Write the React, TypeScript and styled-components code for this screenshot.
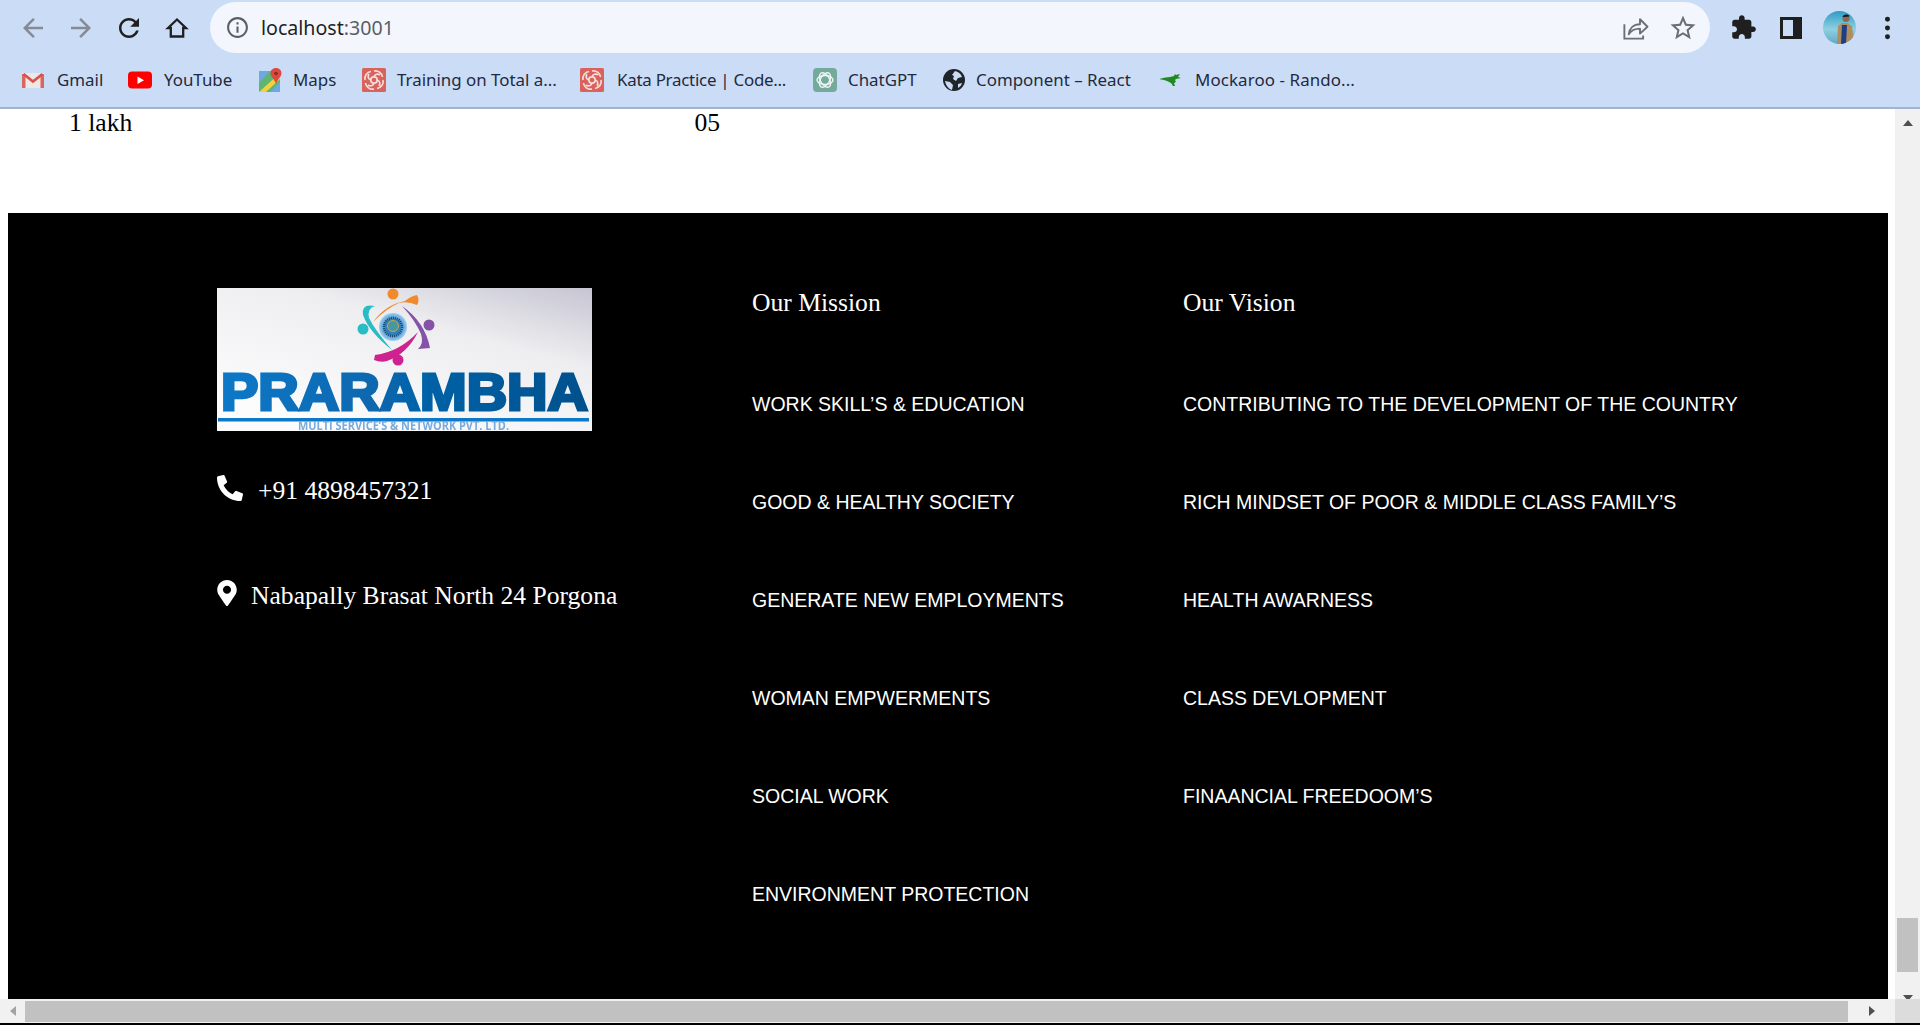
import React from "react";
import styled, { createGlobalStyle } from "styled-components";
import { FaPhoneAlt, FaMapMarkerAlt } from "react-icons/fa";

const Global = createGlobalStyle`
  html, body { margin: 0; padding: 0; background: #000; overflow: hidden; }
  #root { width: 1920px; height: 1025px; }
`;

const Window = styled.div`
  width: 1920px;
  height: 1025px;
  display: flex;
  flex-direction: column;
  overflow: hidden;
  background: #000;
`;
const Chrome = styled.header`
  height: 107px;
  flex: none;
  background: #cbdcf6;
  border-bottom: 2px solid #a4b4d0;
  display: flex;
  flex-direction: column;
`;
const Toolbar = styled.div`
  height: 62px;
  flex: none;
  display: flex;
  align-items: flex-start;
  padding: 2px 9px 0;
`;
const ToolButton = styled.button<{ $color?: string; $size?: number }>`
  width: 48px;
  height: 51px;
  flex: none;
  border: 0;
  padding: 0;
  background: none;
  display: flex;
  align-items: center;
  justify-content: center;
  color: ${(p) => p.$color || "#1f1f1f"};
  svg { width: ${(p) => p.$size || 30}px; height: ${(p) => p.$size || 30}px; fill: currentColor; display: block; }
`;
const Omnibox = styled.div`
  flex: none;
  width: 1500px;
  height: 51px;
  margin: 0 9px;
  border-radius: 26px;
  background: #f3f7fd;
  display: flex;
  align-items: center;
  padding: 0 3px 0 15px;
  box-sizing: border-box;
`;
const UrlText = styled.div`
  flex: 1;
  margin-left: 11px;
  font: 400 19.6px "Noto Sans", sans-serif;
  color: #5b5e63;
  b { font-weight: 400; color: #1f1f1f; }
`;
const Bookmarks = styled.nav`
  flex: 1;
  display: flex;
  align-items: center;
  padding: 0 0 11px 21px;
`;
const Bookmark = styled.div<{ $w: number; $gap?: number; $track?: number }>`
  width: ${(p) => p.$w}px;
  flex: none;
  display: flex;
  align-items: center;
  gap: ${(p) => p.$gap || 12}px;
  font: 400 16.9px/24px "Noto Sans", sans-serif;
  letter-spacing: ${(p) => p.$track || 0}px;
  color: #1f2a3d;
  white-space: nowrap;
  svg { width: 24px; height: 24px; flex: none; display: block; }
`;
const Body = styled.div`
  height: 914px;
  flex: none;
  display: grid;
  grid-template-columns: 1895px 25px;
  grid-template-rows: 890px 24px;
`;
const Page = styled.main`
  background: #fff;
  padding: 0 7px 0 8px;
  overflow: hidden;
  font-family: "Liberation Serif", "Times New Roman", serif;
`;
const DataRow = styled.div`
  height: 104px;
  display: grid;
  grid-template-columns: 625.5px 1fr;
  padding-left: 61px;
  font-size: 25.6px;
  line-height: 27px;
  color: #000;
`;
const Footer = styled.footer`
  height: 786px;
  background: #000;
  color: #fff;
  box-sizing: border-box;
  padding: 75px 0 0 209px;
  display: grid;
  grid-template-columns: 535px 431px 1fr;
  align-items: start;
`;
const Logo = styled.svg`
  width: 375px;
  height: 143px;
  display: block;
`;
const Contact = styled.div<{ $top: number; $gap: number }>`
  margin-top: ${(p) => p.$top}px;
  display: flex;
  align-items: center;
  gap: ${(p) => p.$gap}px;
  font-size: 25.6px;
  line-height: 29px;
  white-space: nowrap;
  svg { flex: none; display: block; margin-top: -5px; }
`;
const Heading = styled.h3`
  margin: 0;
  height: 66px;
  font-size: 25.6px;
  font-weight: 400;
  line-height: 29px;
`;
const LinkList = styled.ul`
  margin: 0;
  padding: 0;
  list-style: none;
`;
const LinkItem = styled.li`
  height: 98px;
  display: flex;
  align-items: center;
  padding-top: 2px;
  box-sizing: border-box;
  font: 400 19.5px/23px "Liberation Sans", Arial, sans-serif;
  white-space: nowrap;
`;
const VScroll = styled.aside`
  background: #f1f1f1;
  display: flex;
  flex-direction: column;
  align-items: center;
`;
const ArrowButton = styled.div<{ $h: number; $w?: number }>`
  height: ${(p) => p.$h}px;
  width: ${(p) => (p.$w ? `${p.$w}px` : "100%")};
  flex: none;
  display: flex;
  align-items: center;
  justify-content: center;
`;
const VThumb = styled.div`
  width: 21px;
  height: 54px;
  margin-top: 782px;
  background: #c1c1c1;
  flex: none;
`;
const HScroll = styled.div`
  background: #f1f1f1;
  display: flex;
  align-items: center;
  justify-content: space-between;
`;
const HThumb = styled.div`
  width: 1823px;
  height: 21px;
  background: #c1c1c1;
  flex: none;
`;
const Corner = styled.div`
  background: #dcdcdc;
`;
const Tri = styled.div<{ $dir: "up" | "down" | "left" | "right"; $color?: string }>`
  width: 0;
  height: 0;
  border-style: solid;
  border-color: transparent;
  ${(p) => {
    const c = p.$color || "#505050";
    if (p.$dir === "up") return `border-width: 0 5.5px 6px; border-bottom-color: ${c};`;
    if (p.$dir === "down") return `border-width: 6px 5.5px 0; border-top-color: ${c};`;
    if (p.$dir === "left") return `border-width: 5.5px 6px 5.5px 0; border-right-color: ${c};`;
    return `border-width: 5.5px 0 5.5px 6px; border-left-color: ${c};`;
  }}
`;

const Back = () => <svg viewBox="0 0 24 24"><path d="M20 11H7.83l5.59-5.59L12 4l-8 8 8 8 1.41-1.41L7.83 13H20v-2z" /></svg>;
const Forward = () => <svg viewBox="0 0 24 24"><path d="M4 11h12.17l-5.59-5.59L12 4l8 8-8 8-1.41-1.41L16.17 13H4v-2z" /></svg>;
const Reload = () => <svg viewBox="0 0 24 24"><path d="M17.65 6.35C16.2 4.9 14.21 4 12 4c-4.42 0-7.99 3.58-7.99 8s3.57 8 7.99 8c3.73 0 6.84-2.55 7.73-6h-2.08c-.82 2.33-3.04 4-5.65 4-3.31 0-6-2.69-6-6s2.69-6 6-6c1.66 0 3.14.69 4.22 1.78L13 11h7V4l-2.35 2.35z" /></svg>;
const Home = () => (
  <svg viewBox="0 0 24 24" style={{ fill: "none" }}>
    <path d="M12 3.500L3 12h2.800v8.500h12.400V12H21z" stroke="#1f1f1f" strokeWidth="2.300" strokeLinejoin="miter" />
  </svg>
);
const Info = () => <svg viewBox="0 0 24 24" width="25" height="25" fill="#5b5e63" style={{ flex: "none" }}><path d="M11 7h2v2h-2zm0 4h2v6h-2zm1-9C6.48 2 2 6.48 2 12s4.48 10 10 10 10-4.48 10-10S17.52 2 12 2zm0 18c-4.41 0-8-3.59-8-8s3.59-8 8-8 8 3.59 8 8-3.59 8-8 8z" /></svg>;
const Share = () => (
  <svg viewBox="0 0 24 24" style={{ fill: "none" }}>
    <path d="M3.5 9v11.5h15V18" stroke="#6b6e73" strokeWidth="1.5" />
    <path d="M7 17c.6-5 4-8 9-8V5l6 6-6 5.5v-4c-4 0-7 1.200-9 4.500z" stroke="#6b6e73" strokeWidth="1.500" strokeLinejoin="round" />
  </svg>
);
const Star = () => <svg viewBox="0 0 24 24"><path d="M22 9.24l-7.19-.62L12 2 9.19 8.63 2 9.24l5.46 4.73L5.82 21 12 17.27 18.18 21l-1.63-7.03L22 9.24zM12 15.4l-3.76 2.27 1-4.28-3.32-2.88 4.38-.38L12 6.1l1.71 4.04 4.38.38-3.32 2.88 1 4.28L12 15.4z" /></svg>;
const Puzzle = () => <svg viewBox="0 0 24 24"><path d="M20.5 11H19V7c0-1.100-.9-2-2-2h-4V3.500C13 2.120 11.880 1 10.500 1S8 2.120 8 3.500V5H4c-1.100 0-1.990.9-1.990 2v3.800H3.500c1.490 0 2.700 1.210 2.700 2.700s-1.210 2.700-2.700 2.700H2V20c0 1.100.9 2 2 2h3.800v-1.500c0-1.490 1.210-2.700 2.700-2.700 1.490 0 2.700 1.210 2.700 2.700V22H17c1.100 0 2-.9 2-2v-4h1.500c1.380 0 2.500-1.120 2.500-2.500S21.880 11 20.500 11z" /></svg>;
const SidePanel = () => (
  <svg viewBox="0 0 22 22" style={{ fill: "none" }}>
    <path fillRule="evenodd" clipRule="evenodd" d="M0 0h22v22H0zM3 3v16h10V3z" fill="#1f1f1f" />
  </svg>
);
const Avatar = () => (
  <svg viewBox="0 0 33 33" style={{ width: 33, height: 33 }}>
    <defs>
      <linearGradient id="sky" x1="0" y1="0" x2="0" y2="1">
        <stop offset="0" stopColor="#2f9ac4" />
        <stop offset="0.55" stopColor="#8fd0e2" />
        <stop offset="1" stopColor="#5fa9c4" />
      </linearGradient>
      <clipPath id="avc"><circle cx="16.500" cy="16.500" r="16.500" /></clipPath>
    </defs>
    <g clipPath="url(#avc)">
      <rect width="33" height="33" fill="url(#sky)" />
      <path d="M14 33l1-18 4-3h5l5 3 2 18z" fill="#b08d5c" />
      <path d="M19 14h5l-1 19h-5z" fill="#1c3f86" />
      <circle cx="23" cy="7.500" r="3.500" fill="#8a6a52" />
      <path d="M19.500 6c.5-3 6-3.500 7-.5z" fill="#10151f" />
    </g>
  </svg>
);
const Kebab = () => (
  <svg viewBox="0 0 6 24" style={{ width: 7, height: 26 }}>
    <circle cx="3" cy="4" r="2.300" /><circle cx="3" cy="12" r="2.300" /><circle cx="3" cy="20" r="2.300" />
  </svg>
);

const GmailIcon = () => (
  <svg viewBox="0 0 24 24">
    <rect x="1" y="5" width="22" height="15" fill="#ebe8e6" />
    <rect x="1" y="6" width="3.500" height="14" fill="#d9675f" />
    <rect x="19.500" y="6" width="3.500" height="14" fill="#d9675f" />
    <path d="M2.500 6L12 13.500 21.500 6" fill="none" stroke="#d9534a" strokeWidth="2.800" />
  </svg>
);
const YouTubeIcon = () => (
  <svg viewBox="0 0 24 24">
    <rect x="0" y="3.500" width="24" height="17" rx="4" fill="#f00" />
    <path d="M9.500 8.500v7.500l6.500-3.750z" fill="#fff" />
  </svg>
);
const MapsIcon = () => (
  <svg viewBox="0 0 24 24" style={{ marginLeft: -1 }}>
    <rect x="1" y="3" width="21" height="21" fill="#5fb56f" />
    <path d="M1 3h11L1 15z" fill="#6fa8dc" />
    <path d="M1 24L22 5v6L8 24z" fill="#f3d03e" />
    <path d="M12 24l10-10v10z" fill="#6ea7e8" />
    <path d="M18 0c-3.300 0-5.500 2.400-5.500 5.300C12.500 9 16.500 11 18 16c1.500-5 5.500-7 5.500-10.700C23.500 2.400 21.300 0 18 0z" fill="#dc4a3f" />
    <circle cx="18" cy="5.500" r="1.800" fill="#8a2a24" />
  </svg>
);
const SwirlIcon = () => (
  <svg viewBox="0 0 24 24">
    <rect width="24" height="24" rx="1.500" fill="#d9625c" />
    <g fill="none" stroke="#f6dcda" strokeWidth="1.700">
      <circle cx="12" cy="12" r="3.200" />
      <path d="M12 3c4-1 8 2 8.500 6M21 12c1 4-2 8-6 8.500M12 21c-4 1-8-2-8.500-6M3 12c-1-4 2-8 6-8.500" />
      <path d="M12 8.800C13 6 16 5.500 18 7M15.200 12c2.800 1 3.300 4 1.800 6M12 15.200C11 18 8 18.500 6 17M8.800 12C6 11 5.500 8 7 6" />
    </g>
  </svg>
);
const GptIcon = () => (
  <svg viewBox="0 0 24 24">
    <rect width="24" height="24" rx="4" fill="#74aa9c" />
    <g fill="none" stroke="#eef5f3" strokeWidth="1.400">
      <ellipse cx="12" cy="12" rx="8" ry="4.500" />
      <ellipse cx="12" cy="12" rx="8" ry="4.500" transform="rotate(60 12 12)" />
      <ellipse cx="12" cy="12" rx="8" ry="4.500" transform="rotate(120 12 12)" />
    </g>
  </svg>
);
const GlobeIcon = () => (
  <svg viewBox="0 0 24 24">
    <circle cx="12" cy="12" r="11" fill="#20242b" />
    <path d="M13 3c3 .5 6 3 7 6l-4 1-2 3-3-2 1-3-2-1zM3 13l5 1 3 3-1 5c-3-1-6-4-7-9zM16 16l4-1c-.5 2-2 4-4 5z" fill="#cbdcf6" />
  </svg>
);
const RooIcon = () => (
  <svg viewBox="0 0 24 24">
    <path d="M-1 11c5-1 8-2 11-2l4-1 1-2 1 1 4-1-2 3 3 1-5 1-1 1 1 2-2 1 1 3h-2l-2-3-4-2-3-1z" fill="#1f8a1f" />
  </svg>
);

const Emblem = () => (
  <g>
    <circle cx="176" cy="39" r="14" fill="url(#halo)" />
    <circle cx="176" cy="39" r="9" fill="none" stroke="#17456f" strokeWidth="2.500" strokeDasharray="1 1" />
    <circle cx="176" cy="38" r="5.500" fill="#4a98a0" stroke="#c2a84c" strokeWidth="1" />
    <circle cx="176" cy="6" r="5.500" fill="#f08a2c" />
    <path d="M156 34Q168 17 188 13Q194 8 200 7Q203 12 200 17Q191 13 182 15Q170 20 156 34z" fill="#f08a2c" />
    <circle cx="146" cy="41" r="5.500" fill="#2cbcc4" />
    <path d="M158 18Q144 15 146 27Q152 44 175 62Q158 42 152 30Q150 20 158 18z" fill="#2cbcc4" />
    <circle cx="212" cy="37" r="5.500" fill="#8452a8" />
    <path d="M185 18Q208 34 213 60L201 61Q207 56 204 46Q198 32 185 18z" fill="#8452a8" />
    <circle cx="181" cy="72" r="5.500" fill="#cf2490" />
    <path d="M201 44Q182 64 158 67L157 72Q164 75 170 73Q190 66 201 44z" fill="#cf2490" />
  </g>
);

const bookmarks: { name: string; w: number; gap?: number; track?: number; icon: React.ReactNode }[] = [
  { name: "Gmail", w: 107, icon: <GmailIcon /> },
  { name: "YouTube", w: 131, icon: <YouTubeIcon /> },
  { name: "Maps", w: 103, gap: 11, icon: <MapsIcon /> },
  { name: "Training on Total a...", w: 218, gap: 11, icon: <SwirlIcon /> },
  { name: "Kata Practice | Code...", w: 233, gap: 13, track: -0.25, icon: <SwirlIcon /> },
  { name: "ChatGPT", w: 129, gap: 11, icon: <GptIcon /> },
  { name: "Component – React", w: 218, gap: 10, icon: <GlobeIcon /> },
  { name: "Mockaroo - Rando...", w: 250, gap: 11, track: 0.1, icon: <RooIcon /> },
];
const mission = ["WORK SKILL’S & EDUCATION", "GOOD & HEALTHY SOCIETY", "GENERATE NEW EMPLOYMENTS", "WOMAN EMPWERMENTS", "SOCIAL WORK", "ENVIRONMENT PROTECTION"];
const vision = ["CONTRIBUTING TO THE DEVELOPMENT OF THE COUNTRY", "RICH MINDSET OF POOR & MIDDLE CLASS FAMILY’S", "HEALTH AWARNESS", "CLASS DEVLOPMENT", "FINAANCIAL FREEDOOM’S"];

export default function App() {
  return (
    <Window>
      <Global />
      <Chrome>
        <Toolbar>
          <ToolButton $color="#858a94"><Back /></ToolButton>
          <ToolButton $color="#858a94"><Forward /></ToolButton>
          <ToolButton><Reload /></ToolButton>
          <ToolButton $size={24}><Home /></ToolButton>
          <Omnibox>
            <Info />
            <UrlText><b>localhost</b>:3001</UrlText>
            <ToolButton><Share /></ToolButton>
            <ToolButton $color="#6b6e73"><Star /></ToolButton>
          </Omnibox>
          <ToolButton $size={27}><Puzzle /></ToolButton>
          <ToolButton $size={22}><SidePanel /></ToolButton>
          <ToolButton><Avatar /></ToolButton>
          <ToolButton><Kebab /></ToolButton>
        </Toolbar>
        <Bookmarks>
          {bookmarks.map((b) => (
            <Bookmark key={b.name} $w={b.w} $gap={b.gap} $track={b.track}>{b.icon}{b.name}</Bookmark>
          ))}
        </Bookmarks>
      </Chrome>
      <Body>
        <Page>
          <DataRow><span>1 lakh</span><span>05</span></DataRow>
          <Footer>
            <div>
              <Logo viewBox="0 0 375 143" role="img" aria-label="Prarambha logo">
                <defs>
                  <linearGradient id="paper" x1="0.3" y1="1" x2="1" y2="0">
                    <stop offset="0" stopColor="#fcfcfd" />
                    <stop offset="0.62" stopColor="#eeeef0" />
                    <stop offset="1" stopColor="#c6c5d2" />
                  </linearGradient>
                  <linearGradient id="word" x1="0" y1="0" x2="1" y2="0">
                    <stop offset="0" stopColor="#0a78c8" />
                    <stop offset="1" stopColor="#03508c" />
                  </linearGradient>
                  <radialGradient id="halo">
                    <stop offset="0.5" stopColor="#2f80c0" />
                    <stop offset="1" stopColor="#9fd0f2" />
                  </radialGradient>
                  <filter id="soft"><feGaussianBlur stdDeviation="0.5" /></filter>
                </defs>
                <rect width="375" height="143" fill="url(#paper)" />
                <g filter="url(#soft)">
                  <Emblem />
                  <text x="4" y="121.500" fontFamily="'Liberation Sans', Arial, sans-serif" fontWeight="700" fontSize="51" fill="url(#word)" stroke="url(#word)" strokeWidth="3" textLength="367" lengthAdjust="spacingAndGlyphs">PRARAMBHA</text>
                  <rect x="1" y="130" width="371" height="3.500" fill="#0c78c8" />
                  <text x="81" y="142" fontFamily="'Open Sans', sans-serif" fontWeight="700" fontSize="12" fill="#7aabdc" textLength="211" lengthAdjust="spacingAndGlyphs">MULTI SERVICE’S &amp; NETWORK PVT. LTD.</text>
                </g>
              </Logo>
              <Contact $top={45} $gap={15}><FaPhoneAlt size={26} />+91 4898457321</Contact>
              <Contact $top={76} $gap={14}><FaMapMarkerAlt size={26} style={{ width: 20 }} />Nabapally Brasat North 24 Porgona</Contact>
            </div>
            <div>
              <Heading>Our Mission</Heading>
              <LinkList>{mission.map((m) => <LinkItem key={m}>{m}</LinkItem>)}</LinkList>
            </div>
            <div>
              <Heading>Our Vision</Heading>
              <LinkList>{vision.map((m) => <LinkItem key={m}>{m}</LinkItem>)}</LinkList>
            </div>
          </Footer>
        </Page>
        <VScroll>
          <ArrowButton $h={27}><Tri $dir="up" /></ArrowButton>
          <VThumb />
          <ArrowButton $h={52}><Tri $dir="down" /></ArrowButton>
        </VScroll>
        <HScroll>
          <ArrowButton $h={24} $w={25}><Tri $dir="left" $color="#a3a3a3" /></ArrowButton>
          <HThumb />
          <ArrowButton $h={24} $w={47}><Tri $dir="right" /></ArrowButton>
        </HScroll>
        <Corner />
      </Body>
    </Window>
  );
}
